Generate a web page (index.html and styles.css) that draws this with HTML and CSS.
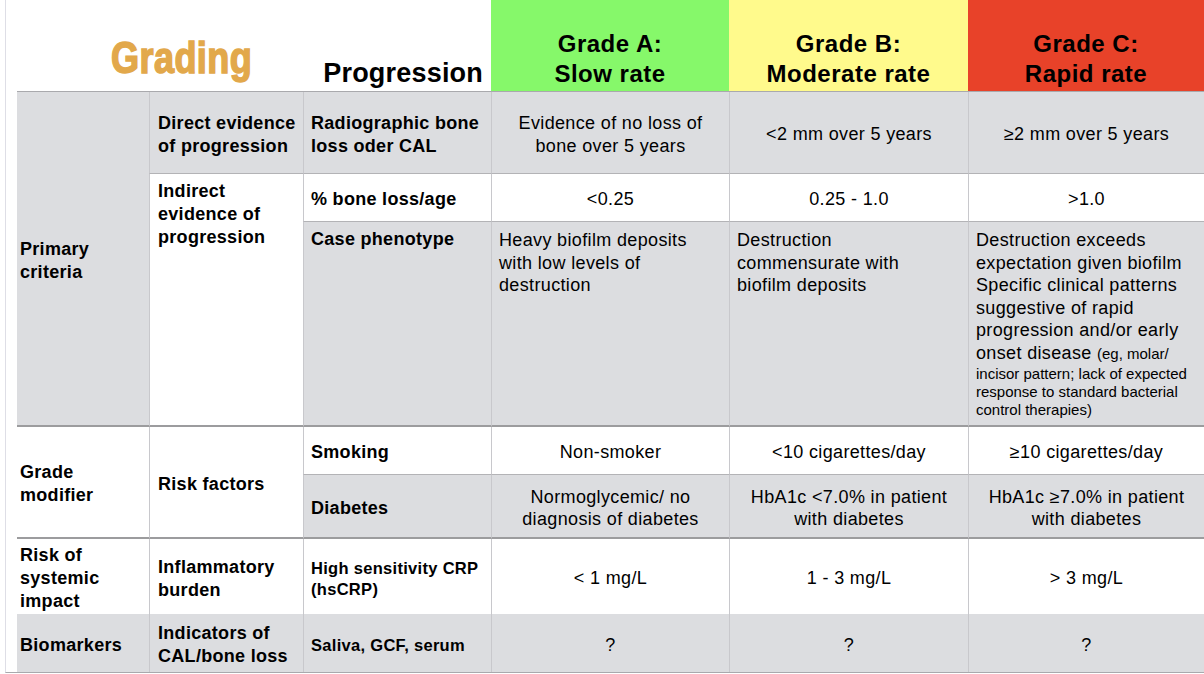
FILE: index.html
```html
<!DOCTYPE html>
<html lang="en">
<head>
<meta charset="utf-8">
<title>Periodontitis Grading</title>
<link rel="stylesheet" href="styles.css">
</head>
<body>
<div class="page">
  <div class="grid">
    <div class="title"><span class="title-text">Grading</span></div>
    <div class="prog">Progression</div>
    <div class="grade ga">Grade A:<br>Slow rate</div>
    <div class="grade gb">Grade B:<br>Moderate rate</div>
    <div class="grade gc">Grade C:<br>Rapid rate</div>

    <div class="cell l1 g rows3 b2">Primary<br>criteria</div>
    <div class="cell l2 g vl b1">Direct evidence<br>of progression</div>
    <div class="cell l3 g vl b1">Radiographic bone<br>loss oder CAL</div>
    <div class="cell dat g vl b1">Evidence of no loss of<br>bone over 5 years</div>
    <div class="cell dat g vl b1">&lt;2 mm over 5 years</div>
    <div class="cell dat g vl b1">&ge;2 mm over 5 years</div>

    <div class="cell l2 vl rows2 b2 top">Indirect<br>evidence of<br>progression</div>
    <div class="cell l3 vl b1">% bone loss/age</div>
    <div class="cell dat vl b1">&lt;0.25</div>
    <div class="cell dat vl b1">0.25 - 1.0</div>
    <div class="cell dat vl b1">&gt;1.0</div>

    <div class="cell l3 g vl b2 top">Case phenotype</div>
    <div class="cell pheno g vl b2">Heavy biofilm deposits<br>with low levels of<br>destruction</div>
    <div class="cell pheno g vl b2">Destruction<br>commensurate with<br>biofilm deposits</div>
    <div class="cell pheno g vl b2">
      <div>Destruction exceeds<br>expectation given biofilm<br>Specific clinical patterns<br>suggestive of rapid<br>progression and/or early<br>onset disease <span class="sm">(eg, molar/</span></div>
      <div class="smblock">incisor pattern; lack of expected<br>response to standard bacterial<br>control therapies)</div>
    </div>

    <div class="cell l1 rows2 b2">Grade<br>modifier</div>
    <div class="cell l2 vl rows2 b2">Risk factors</div>
    <div class="cell l3 vl b1">Smoking</div>
    <div class="cell dat vl b1">Non-smoker</div>
    <div class="cell dat vl b1">&lt;10 cigarettes/day</div>
    <div class="cell dat vl b1">&ge;10 cigarettes/day</div>

    <div class="cell l3 g vl b2">Diabetes</div>
    <div class="cell dat g vl b2">Normoglycemic/ no<br>diagnosis of diabetes</div>
    <div class="cell dat g vl b2">HbA1c &lt;7.0% in patient<br>with diabetes</div>
    <div class="cell dat g vl b2">HbA1c &ge;7.0% in patient<br>with diabetes</div>

    <div class="cell l1">Risk of<br>systemic<br>impact</div>
    <div class="cell l2 vl">Inflammatory<br>burden</div>
    <div class="cell l3 vl small">High sensitivity CRP<br>(hsCRP)</div>
    <div class="cell dat vl">&lt; 1 mg/L</div>
    <div class="cell dat vl">1 - 3 mg/L</div>
    <div class="cell dat vl">&gt; 3 mg/L</div>

    <div class="cell l1 g">Biomarkers</div>
    <div class="cell l2 g vl">Indicators of<br>CAL/bone loss</div>
    <div class="cell l3 g vl small">Saliva, GCF, serum</div>
    <div class="cell dat g vl">?</div>
    <div class="cell dat g vl">?</div>
    <div class="cell dat g vl">?</div>
  </div>
</div>
</body>
</html>
```

FILE: styles.css
```css
* {
  box-sizing: border-box;
  margin: 0;
  padding: 0;
}

html, body {
  background: #ffffff;
}

body {
  font-family: "Liberation Sans", Arial, sans-serif;
  color: #000;
  width: 1204px;
  height: 674px;
  overflow: hidden;
}

.page {
  margin-left: 5px;
  width: 1199px;
  height: 673px;
  border-left: 1px solid #dedee6;
  border-bottom: 1px solid #a9a9ad;
  padding-left: 11px;
}

.grid {
  display: grid;
  grid-template-columns: 132px 154px 188px 238px 239px 236px;
  grid-template-rows: 92px 82px 48px 205px 48px 64px 75px 58px;
}

/* header */
.title {
  grid-column: span 2;
  display: flex;
  align-items: flex-end;
  padding: 0 0 11px 94px;
  border-bottom: 1px solid #a9a9ad;
}

.title-text {
  display: inline-block;
  font-weight: bold;
  font-size: 44px;
  line-height: 1;
  color: #e2a84b;
  -webkit-text-stroke: 1.6px #e2a84b;
  letter-spacing: 0.5px;
  transform: scaleX(0.82);
  transform-origin: left bottom;
}

.prog {
  display: flex;
  align-items: flex-end;
  justify-content: flex-end;
  padding: 0 8px 4px 0;
  font-weight: bold;
  font-size: 27px;
  line-height: 1;
  letter-spacing: 0.2px;
  border-bottom: 1px solid #a9a9ad;
}

.grade {
  text-align: center;
  padding-top: 29px;
  font-weight: bold;
  font-size: 24px;
  line-height: 30px;
  letter-spacing: 0.5px;
  border-bottom: 1px solid #a9a9ad;
}

.ga { background: #86f86a; }
.gb { background: #fffa8c; }
.gc { background: #e84229; }

/* body cells */
.cell {
  display: flex;
  align-items: center;
  padding-top: 4px;
  font-size: 18px;
  line-height: 23px;
  letter-spacing: 0.3px;
}

.l1 {
  font-weight: bold;
  padding-left: 3px;
}

.l2 {
  font-weight: bold;
  padding-left: 8px;
}

.l3 {
  font-weight: bold;
  padding-left: 7px;
}

.small {
  font-size: 16.5px;
  line-height: 21px;
}

.dat {
  justify-content: center;
  text-align: center;
  line-height: 22.5px;
  letter-spacing: 0.35px;
}

.pheno {
  display: block;
  padding: 7px 2px 0 7px;
  line-height: 22.5px;
  letter-spacing: 0.35px;
  white-space: nowrap;
}

.sm {
  font-size: 15px;
  letter-spacing: 0;
}

.smblock {
  font-size: 15px;
  line-height: 18px;
  letter-spacing: 0;
}

.top {
  align-items: flex-start;
  padding-top: 6px;
}

.rows3 { grid-row: span 3; }
.rows2 { grid-row: span 2; }

.g { background: #dcdde0; }
.vl { border-left: 1px solid #c8c8cc; }
.b1 { border-bottom: 1px solid #b3b3b6; }
.b2 { border-bottom: 2px solid #9c9c9e; }
```
